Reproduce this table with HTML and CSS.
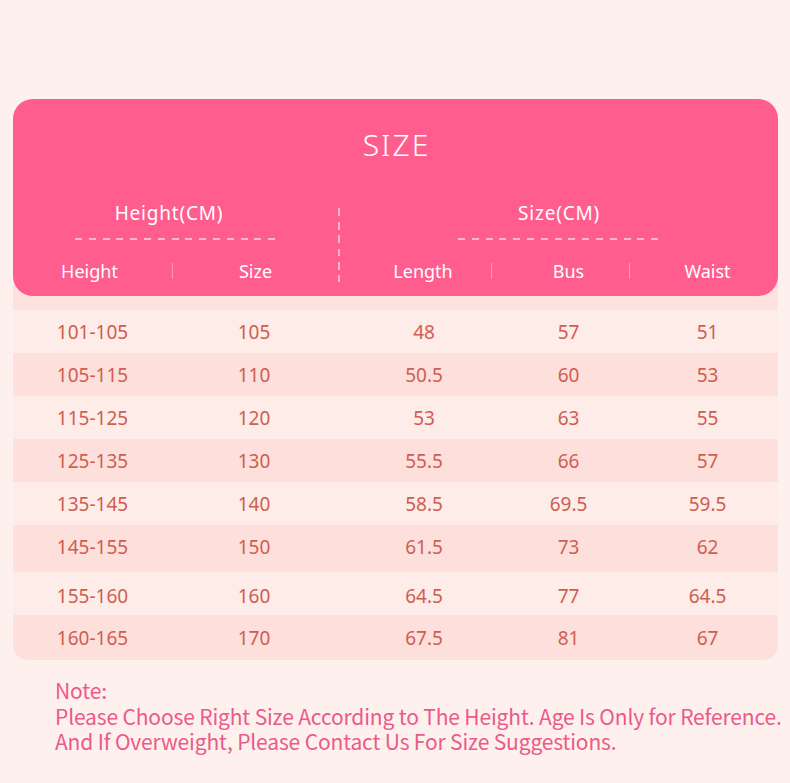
FILE: index.html
```html
<!DOCTYPE html>
<html lang="en">
<head>
<meta charset="utf-8">
<title>Size Chart</title>
<link rel="stylesheet" href="styles.css">
</head>
<body>
<div class="card">
  <div class="head">
    <div class="title">SIZE</div>
    <div class="groups">
      <div class="group group-left">
        <div class="gtitle gtitle-left">Height(CM)</div>
        <div class="gdash"></div>
        <div class="labels labels-left">
          <div class="lab lab-a">Height</div>
          <div class="sep"></div>
          <div class="lab">Size</div>
        </div>
      </div>
      <div class="vdash"></div>
      <div class="group group-right">
        <div class="gtitle">Size(CM)</div>
        <div class="gdash"></div>
        <div class="labels labels-right">
          <div class="lab lab-c">Length</div>
          <div class="sep"></div>
          <div class="lab lab-d">Bus</div>
          <div class="sep"></div>
          <div class="lab lab-e">Waist</div>
        </div>
      </div>
    </div>
  </div>
  <div class="rows">
    <div class="row"><span>101-105</span><span>105</span><span class="c3">48</span><span class="c4">57</span><span class="c5">51</span></div>
    <div class="row alt"><span>105-115</span><span>110</span><span class="c3">50.5</span><span class="c4">60</span><span class="c5">53</span></div>
    <div class="row"><span>115-125</span><span>120</span><span class="c3">53</span><span class="c4">63</span><span class="c5">55</span></div>
    <div class="row alt"><span>125-135</span><span>130</span><span class="c3">55.5</span><span class="c4">66</span><span class="c5">57</span></div>
    <div class="row"><span>135-145</span><span>140</span><span class="c3">58.5</span><span class="c4">69.5</span><span class="c5">59.5</span></div>
    <div class="row alt tall"><span>145-155</span><span>150</span><span class="c3">61.5</span><span class="c4">73</span><span class="c5">62</span></div>
    <div class="row low"><span>155-160</span><span>160</span><span class="c3">64.5</span><span class="c4">77</span><span class="c5">64.5</span></div>
    <div class="row alt last"><span>160-165</span><span>170</span><span class="c3">67.5</span><span class="c4">81</span><span class="c5">67</span></div>
  </div>
</div>
<div class="note">
  <p>Note:</p>
  <p>Please Choose Right Size According to The Height. Age Is Only for Reference.</p>
  <p>And If Overweight, Please Contact Us For Size Suggestions.</p>
</div>
</body>
</html>
```
FILE: styles.css
```css
html, body {
  margin: 0;
  padding: 0;
}
body {
  background: #fef0ed;
  font-family: "Noto Sans", "DejaVu Sans", sans-serif;
  width: 790px;
  height: 783px;
  overflow: hidden;
}
.card {
  margin: 99px 0 0 13px;
  width: 765px;
  background: #fde2de;
  border-radius: 20px 20px 15px 15px;
}
.head {
  background: #ff5d8e;
  border-radius: 20px;
  padding: 26px 0 13px;
  color: #ffffff;
}
.title {
  font-size: 30px;
  font-weight: 300;
  line-height: 40px;
  letter-spacing: 2px;
  text-align: center;
  padding-left: 2px;
}
.groups {
  display: grid;
  grid-template-columns: 325px 2px 1fr;
  margin-top: 36px;
}
.gtitle {
  font-size: 19px;
  line-height: 24px;
  letter-spacing: 0.8px;
  text-align: center;
}
.gtitle-left {
  padding-right: 13px;
}
.gdash {
  width: 202px;
  height: 2px;
  margin: 13px auto 0;
  background: repeating-linear-gradient(90deg, rgba(255, 215, 228, 0.75) 0 7px, transparent 7px 13.8px);
}
.group-left .gdash {
  margin-left: 62px;
}
.vdash {
  margin: 7px 0 1px;
  background: repeating-linear-gradient(180deg, rgba(255, 215, 228, 0.75) 0 8px, transparent 8px 13.5px);
}
.labels {
  display: grid;
  align-items: center;
  margin-top: 19px;
  font-size: 18px;
  line-height: 24px;
}
.labels-left {
  grid-template-columns: 159px 1px 1fr;
}
.labels-right {
  grid-template-columns: 151px 1px 137px 1px 1fr;
}
.lab {
  text-align: center;
}
.lab-a { padding-right: 6px; }
.lab-c { padding-left: 15px; }
.lab-d { padding-left: 16px; }
.lab-e { padding-left: 7px; }
.sep {
  height: 16px;
  background: rgba(255, 200, 218, 0.55);
}
.rows {
  padding-top: 14px;
}
.row {
  display: grid;
  grid-template-columns: 159px 164px 155px 138px 149px;
  align-items: center;
  height: 43px;
  box-sizing: border-box;
  background: #feece8;
  color: #cf5e51;
  font-size: 19px;
}
.row span {
  text-align: center;
}
.row .c3 { padding-left: 21px; }
.row .c4 { padding-left: 17px; }
.row .c5 { padding-left: 8px; }
.row.alt {
  background: #fde0dc;
}
.row.tall {
  height: 47px;
  padding-bottom: 4px;
}
.row.low {
  padding-top: 5px;
}
.row.last {
  height: 45px;
  border-radius: 0 0 15px 15px;
}
.note {
  margin: 18px 0 0 55px;
  color: #ea5a8a;
  font-family: "Noto Sans CJK SC", "Noto Sans", sans-serif;
  font-size: 21px;
  line-height: 25.5px;
  letter-spacing: -0.15px;
}
.note p {
  margin: 0;
}
```
